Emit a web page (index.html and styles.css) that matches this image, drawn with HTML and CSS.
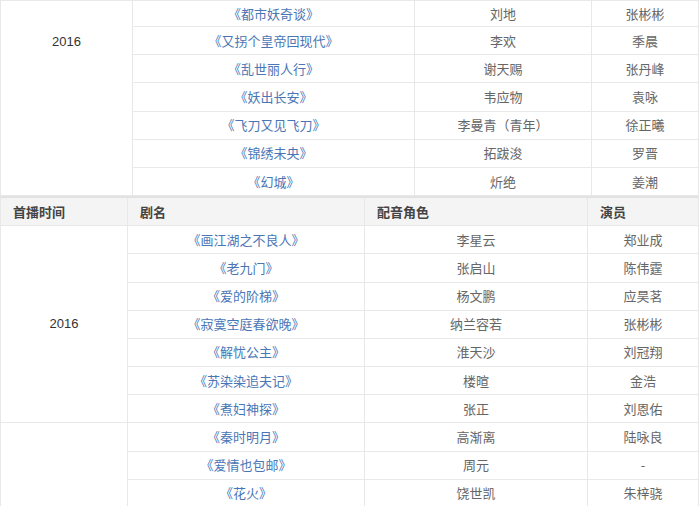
FILE: index.html
```html
<!DOCTYPE html>
<html lang="zh-CN">
<head>
<meta charset="utf-8">
<link rel="stylesheet" href="styles.css">
</head>
<body>
<div class="page">
  <table class="grid grid-top">
    <colgroup>
      <col class="c1a"><col class="c2a"><col class="c3a"><col class="c4a">
    </colgroup>
    <tbody>
      <tr class="first">
        <td class="year year-top" rowspan="7">2016</td>
        <td><a class="link">《都市妖奇谈》</a></td><td>刘地</td><td>张彬彬</td>
      </tr>
      <tr><td><a class="link">《又拐个皇帝回现代》</a></td><td>李欢</td><td>季晨</td></tr>
      <tr><td><a class="link">《乱世丽人行》</a></td><td>谢天赐</td><td>张丹峰</td></tr>
      <tr><td><a class="link">《妖出长安》</a></td><td>韦应物</td><td>袁咏</td></tr>
      <tr><td><a class="link">《飞刀又见飞刀》</a></td><td>李曼青（青年）</td><td>徐正曦</td></tr>
      <tr><td><a class="link">《锦绣未央》</a></td><td>拓跋浚</td><td>罗晋</td></tr>
      <tr><td><a class="link">《幻城》</a></td><td>炘绝</td><td>姜潮</td></tr>
    </tbody>
  </table>
  <table class="grid grid-bottom">
    <colgroup>
      <col class="c1b"><col class="c2b"><col class="c3b"><col class="c4b">
    </colgroup>
    <thead>
      <tr class="head">
        <th>首播时间</th><th>剧名</th><th>配音角色</th><th>演员</th>
      </tr>
    </thead>
    <tbody>
      <tr>
        <td class="year" rowspan="7">2016</td>
        <td><a class="link">《画江湖之不良人》</a></td><td>李星云</td><td>郑业成</td>
      </tr>
      <tr><td><a class="link">《老九门》</a></td><td>张启山</td><td>陈伟霆</td></tr>
      <tr><td><a class="link">《爱的阶梯》</a></td><td>杨文鹏</td><td>应昊茗</td></tr>
      <tr><td><a class="link">《寂寞空庭春欲晚》</a></td><td>纳兰容若</td><td>张彬彬</td></tr>
      <tr><td><a class="link">《解忧公主》</a></td><td>淮天沙</td><td>刘冠翔</td></tr>
      <tr><td><a class="link">《苏染染追夫记》</a></td><td>楼暄</td><td>金浩</td></tr>
      <tr><td><a class="link">《煮妇神探》</a></td><td>张正</td><td>刘恩佑</td></tr>
      <tr>
        <td class="year" rowspan="3"></td>
        <td><a class="link">《秦时明月》</a></td><td>高渐离</td><td>陆咏良</td>
      </tr>
      <tr><td><a class="link">《爱情也包邮》</a></td><td>周元</td><td>-</td></tr>
      <tr><td><a class="link">《花火》</a></td><td>饶世凯</td><td>朱梓骁</td></tr>
    </tbody>
  </table>
</div>
</body>
</html>
```
FILE: styles.css
```css
html, body {
  margin: 0;
  padding: 0;
  background: #ffffff;
}

.page {
  width: 698px;
  font-family: "Noto Sans CJK SC", "Liberation Sans", sans-serif;
  font-size: 13px;
  color: #666666;
}

.grid {
  width: 698px;
  border-collapse: collapse;
  table-layout: fixed;
}

.grid td,
.grid th {
  border: 1px solid #e8e8e8;
  height: 27.2px;
  padding: 0;
  text-align: center;
  vertical-align: middle;
  line-height: 18px;
  font-weight: normal;
}

.grid-top {
  border-top: 1px solid #dcdcdc;
}

.grid-top tr.first td {
  height: 25px;
}

.c1a { width: 132px; }
.c2a { width: 282px; }
.c3a { width: 177px; }
.c4a { width: 107px; }

.c1b { width: 127px; }
.c2b { width: 237px; }
.c3b { width: 223px; }
.c4b { width: 111px; }

.grid-bottom {
  border-top: 2px solid #e2e2e2;
}

.head th {
  background: #f4f4f4;
  text-align: left;
  padding-left: 12px;
  font-weight: bold;
  color: #444444;
  height: 27px;
}

.year {
  font-family: "Liberation Sans", Arial, sans-serif;
  color: #333333;
  font-size: 13px;
}

.grid td.year-top {
  vertical-align: top;
  padding-top: 32px;
}

.link {
  color: #4a76b6;
  text-decoration: none;
}
```
